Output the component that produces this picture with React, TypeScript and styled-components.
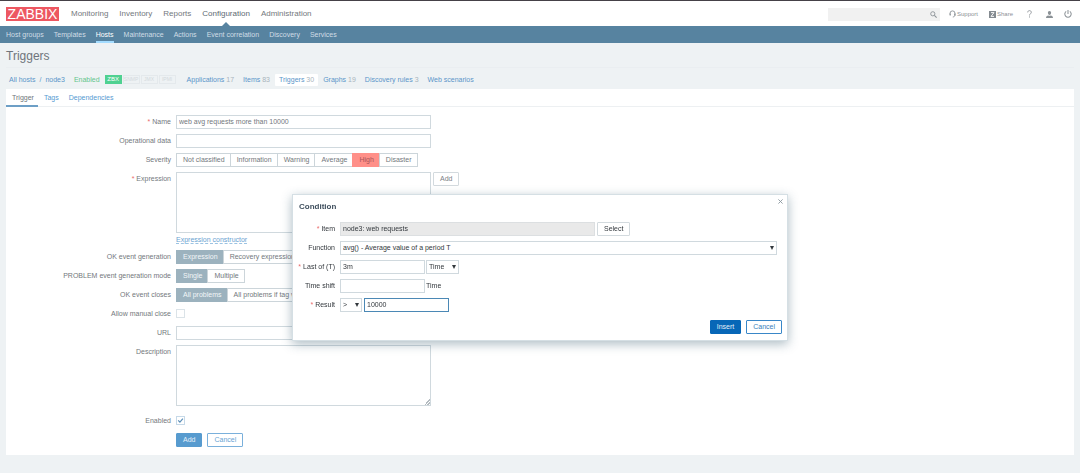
import React from "react";
import styled, { createGlobalStyle, css } from "styled-components";

const GlobalStyle = createGlobalStyle`
  *, *::before, *::after { box-sizing: border-box; }
  body {
    margin: 0;
    background: #eef2f4;
    color: #73787d;
    font-family: "Liberation Sans", Arial, sans-serif;
    font-size: 7px;
    line-height: 12px;
  }
  button, input, select, textarea { font: inherit; color: inherit; margin: 0; }
  a { text-decoration: none; color: inherit; }
  ul { list-style: none; margin: 0; padding: 0; }
`;

const Header = styled.header`
  display: flex;
  align-items: center;
  height: 26px;
  padding: 1px 5px 0 6px;
  background: #fff;
  border-top: 1px solid #454148;
`;

const Logo = styled.a`
  flex: none;
  width: 53px;
  height: 14px;
  margin-right: 12px;
  background: #ed5761;
  color: #fff;
  font-size: 14px;
  line-height: 14px;
  text-align: center;
`;

const MainMenu = styled.ul`
  display: flex;
  flex: 1;
  gap: 11px;
  font-size: 8px;
`;

const MainItem = styled.li<{ $active?: boolean }>`
  position: relative;
  line-height: 24px;
  ${(p) =>
    p.$active &&
    css`
      color: #5d6a74;
      &::after {
        content: "";
        position: absolute;
        left: 50%;
        bottom: 0;
        margin-left: -4px;
        border: 4px solid transparent;
        border-top: 0;
        border-bottom-color: #5783a0;
      }
    `}
`;

const HeaderTools = styled.div`
  display: flex;
  align-items: center;
  color: #8b9196;
  font-size: 6px;
`;

const SearchBox = styled.form`
  display: flex;
  align-items: center;
  width: 112px;
  height: 13px;
  margin-right: 9px;
  background: #f1f1f1;
`;

const SearchInput = styled.input`
  flex: 1;
  min-width: 0;
  border: 0;
  background: none;
  outline: 0;
`;

const PlainButton = styled.button`
  display: flex;
  padding: 0 3px 0 0;
  border: 0;
  background: none;
  color: #8b9196;
`;

const ToolLink = styled.a<{ $gap: number }>`
  display: flex;
  align-items: center;
  gap: 1px;
  margin-right: ${(p) => p.$gap}px;
`;

const SubMenu = styled.nav`
  height: 17px;
  padding: 0 6px;
  background: #5783a0;
  color: #d0dde6;
  ul { display: flex; gap: 10px; }
`;

const SubItem = styled.li<{ $active?: boolean }>`
  height: 17px;
  line-height: 17px;
  ${(p) =>
    p.$active &&
    css`
      color: #fff;
      border-bottom: 2px solid #a3dcff;
    `}
`;

const Main = styled.main`
  padding: 0 6px 18px;
`;

const Title = styled.h1`
  margin: 0;
  padding-top: 1px;
  height: 25px;
  font-size: 12px;
  line-height: 25px;
  font-weight: 400;
  color: #6f757b;
  border-bottom: 1px solid #eaeef1;
`;

const HostNav = styled.nav`
  display: flex;
  align-items: center;
  height: 21px;
  padding: 2px 3px 0;
  color: #5a95c9;
  white-space: nowrap;
`;

const Crumbs = styled.div`
  display: flex;
  gap: 4px;
  margin-right: 9px;
`;

const Status = styled.span`
  margin-right: 5px;
  color: #65c58c;
`;

const Badges = styled.div`
  display: flex;
  gap: 1px;
  margin-right: 7px;
`;

const Badge = styled.span<{ $on?: boolean }>`
  height: 9px;
  min-width: 17px;
  border: 1px solid ${(p) => (p.$on ? "#4fd191" : "#e4e9ec")};
  background: ${(p) => (p.$on ? "#4fd191" : "transparent")};
  color: ${(p) => (p.$on ? "#fff" : "#d3d9dd")};
  font-size: ${(p) => (p.$on ? 6 : 5)}px;
  line-height: 7px;
  text-align: center;
`;

const HostLink = styled.a<{ $active?: boolean }>`
  height: 12px;
  padding: 0 4px;
  margin-right: 1px;
  border-radius: 1px;
  background: ${(p) => (p.$active ? "#fff" : "transparent")};
`;

const Count = styled.span`
  color: #a9b4bc;
`;

const Panel = styled.section`
  background: #fff;
`;

const Tabs = styled.div`
  display: flex;
  height: 18px;
  border-bottom: 1px solid #edf0f2;
`;

const Tab = styled.button<{ $active?: boolean }>`
  height: 18px;
  padding: 2px 4px 0 6px;
  border: 0;
  border-bottom: 2px solid ${(p) => (p.$active ? "#6d9fc6" : "transparent")};
  background: none;
  color: ${(p) => (p.$active ? "#6f757b" : "#559ad2")};
`;

const Form = styled.form`
  padding: 8px 0;
`;

const Row = styled.div<{ $dialog?: boolean }>`
  display: grid;
  grid-template-columns: ${(p) => (p.$dialog ? "37px" : "165px")} minmax(0, 1fr);
  gap: 5px;
  margin-bottom: 5px;
`;

const LabelCell = styled.label`
  display: flex;
  justify-content: flex-end;
  gap: 2px;
  line-height: 14px;
  white-space: nowrap;
`;

const Star = styled.span`
  color: #ea6a6a;
`;

const Field = styled.div<{ $gap?: number }>`
  display: flex;
  align-items: flex-start;
  gap: ${(p) => p.$gap ?? 2}px;
  min-height: 14px;
  line-height: 14px;
`;

const Stack = styled.div`
  display: flex;
  flex-direction: column;
  align-items: flex-start;
  width: 255px;
`;

const TextInput = styled.input<{ $w: number; $focus?: boolean }>`
  width: ${(p) => p.$w}px;
  height: 14px;
  padding: 0 2px;
  border: 1px solid ${(p) => (p.$focus ? "#4b88b5" : "#d0d9de")};
  background: #fff;
  outline: 0;
  &[readonly] { background: #e9e9e9; border-color: #dcdfe1; }
`;

const TextArea = styled.textarea<{ $resize?: boolean }>`
  display: block;
  width: 255px;
  height: 61px;
  margin-bottom: ${(p) => (p.$resize ? 3 : 0)}px;
  padding: 2px;
  border: 1px solid #d0d9de;
  background: #fff;
  outline: 0;
  resize: ${(p) => (p.$resize ? "vertical" : "none")};
  &::-webkit-resizer {
    background: linear-gradient(135deg, transparent 80%, #b4bbc0 80%, #b4bbc0 84%, transparent 84%, transparent 90%, #b4bbc0 90%, #b4bbc0 94%, transparent 94%);
  }
`;

const DottedLink = styled.a`
  height: 11px;
  margin-bottom: 1px;
  color: #6aa3d1;
  border-bottom: 1px dashed #9cc3e2;
`;

const Segments = styled.div`
  display: flex;
`;

const Segment = styled.label<{ $on?: string }>`
  height: 14px;
  margin-left: -1px;
  padding: 0 5px 0 6px;
  border: 1px solid #ccd5da;
  line-height: 12px;
  white-space: nowrap;
  &:first-child { margin-left: 0; }
  input {
    position: absolute;
    opacity: 0;
    pointer-events: none;
  }
  &:has(input:checked) {
    background: ${(p) => p.$on ?? "#9cb2be"};
    border-color: ${(p) => p.$on ?? "#9cb2be"};
    color: ${(p) => (p.$on ? "#a8555a" : "#f2f6f8")};
  }
`;

const CheckBox = styled.input`
  appearance: none;
  width: 9px;
  height: 9px;
  margin-top: 2px;
  border: 1px solid #dbe3e8;
  background: #fff;
  &:checked {
    border-color: #c6d9e8;
    background: #fff
      url("data:image/svg+xml,%3Csvg xmlns='http://www.w3.org/2000/svg' viewBox='0 0 7 7'%3E%3Cpath d='M1.2 3.4l1.7 1.8 3-3.6' fill='none' stroke='%235c8fb8' stroke-width='1.2'/%3E%3C/svg%3E");
  }
`;

type Kind = "primary" | "outline" | "grey" | "darkGrey" | "blue" | "blueOutline";
const kinds: Record<Kind, [string, string, string]> = {
  primary: ["#579bcf", "#579bcf", "#e6f1fa"],
  outline: ["#fff", "#7ab0db", "#67a3d3"],
  grey: ["#fff", "#d3dade", "#7b8086"],
  darkGrey: ["#fff", "#d3dade", "#33383d"],
  blue: ["#0767b7", "#0767b7", "#e3eef8"],
  blueOutline: ["#fff", "#3987c8", "#3a80bb"],
};

const Button = styled.button<{ $kind: Kind }>`
  height: 14px;
  padding: 0 6px;
  border: 1px solid ${(p) => kinds[p.$kind][1]};
  border-radius: 1px;
  background: ${(p) => kinds[p.$kind][0]};
  color: ${(p) => kinds[p.$kind][2]};
  line-height: 12px;
`;

const Actions = styled.div<{ $dialog?: boolean }>`
  display: flex;
  gap: 5px;
  ${(p) => (p.$dialog ? "justify-content: flex-end; margin-top: 8px;" : "padding-left: 170px;")}
`;

const Overlay = styled.div`
  position: fixed;
  inset: 0;
  display: flex;
  justify-content: center;
  align-items: flex-start;
  padding-top: 194px;
`;

const Dialog = styled.section`
  position: relative;
  width: 496px;
  padding: 6px 5px;
  border: 1px solid #d5dfe4;
  background: #fff;
  color: #33383d;
  box-shadow: 0 3px 10px rgba(40, 80, 100, 0.38);
`;

const DialogTitle = styled.h2`
  margin: 0 0 9px 1px;
  font-size: 8px;
  line-height: 12px;
  font-weight: 700;
  color: #3f4f5e;
`;

const Close = styled.button`
  position: absolute;
  top: 2px;
  right: 2px;
  display: flex;
  padding: 2px;
  border: 0;
  background: none;
  color: #8a969e;
`;

const SelectWrap = styled.span<{ $w: number }>`
  position: relative;
  display: block;
  width: ${(p) => p.$w}px;
  select {
    appearance: none;
    display: block;
    width: 100%;
    height: 14px;
    padding: 0 2px;
    border: 1px solid #d0d9de;
    border-radius: 0;
    background: #fff;
    line-height: 12px;
  }
  svg {
    position: absolute;
    top: 5px;
    right: 3px;
    pointer-events: none;
  }
`;

const Select = ({ id, width, value, label }: { id: string; width: number; value: string; label?: string }) => (
  <SelectWrap $w={width}>
    <select id={id} aria-label={label} defaultValue={value}>
      <option>{value}</option>
    </select>
    <svg width="4" height="4" viewBox="0 0 4 4">
      <path d="M0 0h4L2 4z" fill="#33383d" />
    </svg>
  </SelectWrap>
);

const FormLabel = ({ text, id, required }: { text: string; id?: string; required?: boolean }) => (
  <LabelCell htmlFor={id}>
    {required && <Star>*</Star>}
    {text}
  </LabelCell>
);

const RadioGroup = ({ name, items, checked, color }: { name: string; items: string[]; checked: string; color?: string }) => (
  <Segments role="radiogroup" aria-label={name}>
    {items.map((item) => (
      <Segment key={item} $on={color}>
        <input type="radio" name={name} defaultChecked={item === checked} />
        {item}
      </Segment>
    ))}
  </Segments>
);

const mainMenu = ["Monitoring", "Inventory", "Reports", "Configuration", "Administration"];
const subMenu = ["Host groups", "Templates", "Hosts", "Maintenance", "Actions", "Event correlation", "Discovery", "Services"];
const hostLinks: [string, string][] = [
  ["Applications", "17"],
  ["Items", "83"],
  ["Triggers", "30"],
  ["Graphs", "19"],
  ["Discovery rules", "3"],
  ["Web scenarios", ""],
];

export default function App() {
  return (
    <>
      <GlobalStyle />
      <Header>
        <Logo href="#">ZABBIX</Logo>
        <MainMenu>
          {mainMenu.map((m) => (
            <MainItem key={m} $active={m === "Configuration"}>
              <a href="#">{m}</a>
            </MainItem>
          ))}
        </MainMenu>
        <HeaderTools>
          <SearchBox>
            <SearchInput aria-label="Search" />
            <PlainButton type="button" aria-label="Search">
              <svg width="7" height="7" viewBox="0 0 7 7" fill="none" stroke="currentColor">
                <circle cx="2.8" cy="2.8" r="2.1" strokeWidth="0.9" />
                <path d="M4.4 4.4l2.2 2.2" strokeWidth="1.1" />
              </svg>
            </PlainButton>
          </SearchBox>
          <ToolLink href="#" $gap={11}>
            <svg width="7" height="8" viewBox="0 0 7 8" fill="none" stroke="currentColor" strokeWidth="0.9">
              <path d="M1 4.6V3.4a2.5 2.5 0 0 1 5 0v1.4c0 1.2-.7 2-2.2 2.2" />
              <path d="M1.2 3.4v2M5.8 3.4v2" strokeWidth="1.2" />
            </svg>
            Support
          </ToolLink>
          <ToolLink href="#" $gap={14}>
            <svg width="7" height="7" viewBox="0 0 7 7">
              <path d="M0 0h7v7H0z" fill="#858b91" />
              <path d="M2 1.6h3L2 5.4h3" fill="none" stroke="#fff" strokeWidth="0.9" />
            </svg>
            Share
          </ToolLink>
          <ToolLink href="#" $gap={14} aria-label="Help">
            <svg width="5" height="8" viewBox="0 0 5 8" fill="none" stroke="currentColor" strokeWidth="0.9">
              <path d="M.7 2.4C.7 1.3 1.5.6 2.5.6s1.8.7 1.8 1.7c0 1.4-1.8 1.5-1.8 3.2M2.5 6.4v1.1" />
            </svg>
          </ToolLink>
          <ToolLink href="#" $gap={11} aria-label="User profile">
            <svg width="7" height="7" viewBox="0 0 7 7" fill="currentColor">
              <path d="M3.5 0C4.5 0 5.1.8 5.1 1.8S4.5 4 3.5 4 1.9 2.8 1.9 1.8 2.5 0 3.5 0zM0 7c0-1.8.8-2.2 2.4-2.6.7.4 1.5.4 2.2 0C6.2 4.8 7 5.2 7 7z" />
            </svg>
          </ToolLink>
          <ToolLink href="#" $gap={3} aria-label="Sign out">
            <svg width="8" height="8" viewBox="0 0 7 7" fill="none" stroke="currentColor" strokeWidth="0.9">
              <path d="M1.9 1.2a2.8 2.8 0 1 0 3.2 0M3.5 0v3.4" />
            </svg>
          </ToolLink>
        </HeaderTools>
      </Header>
      <SubMenu>
        <ul>
          {subMenu.map((m) => (
            <SubItem key={m} $active={m === "Hosts"}>
              <a href="#">{m}</a>
            </SubItem>
          ))}
        </ul>
      </SubMenu>

      <Main>
        <Title>Triggers</Title>
        <HostNav>
          <Crumbs>
            <a href="#">All hosts</a>
            <span>/</span>
            <a href="#">node3</a>
          </Crumbs>
          <Status>Enabled</Status>
          <Badges>
            <Badge $on>ZBX</Badge>
            <Badge>SNMP</Badge>
            <Badge>JMX</Badge>
            <Badge>IPMI</Badge>
          </Badges>
          {hostLinks.map(([name, count]) => (
            <HostLink key={name} href="#" $active={name === "Triggers"}>
              {name}
              {count && <> <Count>{count}</Count></>}
            </HostLink>
          ))}
        </HostNav>

        <Panel>
          <Tabs role="tablist">
            <Tab role="tab" aria-selected $active>Trigger</Tab>
            <Tab role="tab">Tags</Tab>
            <Tab role="tab">Dependencies</Tab>
          </Tabs>
          <Form>
            <Row>
              <FormLabel id="name" text="Name" required />
              <Field><TextInput id="name" $w={255} defaultValue="web avg requests more than 10000" /></Field>
            </Row>
            <Row>
              <FormLabel id="opdata" text="Operational data" />
              <Field><TextInput id="opdata" $w={255} /></Field>
            </Row>
            <Row>
              <FormLabel text="Severity" />
              <RadioGroup
                name="Severity"
                items={["Not classified", "Information", "Warning", "Average", "High", "Disaster"]}
                checked="High"
                color="#ff9089"
              />
            </Row>
            <Row>
              <FormLabel id="expression" text="Expression" required />
              <Field>
                <Stack>
                  <TextArea id="expression" />
                  <DottedLink href="#">Expression constructor</DottedLink>
                </Stack>
                <Button type="button" $kind="grey">Add</Button>
              </Field>
            </Row>
            <Row>
              <FormLabel text="OK event generation" />
              <RadioGroup name="OK event generation" items={["Expression", "Recovery expression", "None"]} checked="Expression" />
            </Row>
            <Row>
              <FormLabel text="PROBLEM event generation mode" />
              <RadioGroup name="PROBLEM event generation mode" items={["Single", "Multiple"]} checked="Single" />
            </Row>
            <Row>
              <FormLabel text="OK event closes" />
              <RadioGroup name="OK event closes" items={["All problems", "All problems if tag values match"]} checked="All problems" />
            </Row>
            <Row>
              <FormLabel id="manual" text="Allow manual close" />
              <Field><CheckBox id="manual" type="checkbox" /></Field>
            </Row>
            <Row>
              <FormLabel id="url" text="URL" />
              <Field><TextInput id="url" $w={255} /></Field>
            </Row>
            <Row>
              <FormLabel id="description" text="Description" />
              <Field><TextArea id="description" $resize /></Field>
            </Row>
            <Row>
              <FormLabel id="enabled" text="Enabled" />
              <Field><CheckBox id="enabled" type="checkbox" defaultChecked /></Field>
            </Row>
            <Actions>
              <Button type="button" $kind="primary">Add</Button>
              <Button type="button" $kind="outline">Cancel</Button>
            </Actions>
          </Form>
        </Panel>
      </Main>

      <Overlay>
        <Dialog role="dialog" aria-labelledby="condition-title">
          <Close type="button" aria-label="Close">
            <svg width="5" height="5" viewBox="0 0 5 5" fill="none" stroke="currentColor" strokeWidth="0.9">
              <path d="M.4.4l4.2 4.2M4.6.4L.4 4.6" />
            </svg>
          </Close>
          <DialogTitle id="condition-title">Condition</DialogTitle>
          <Row $dialog>
            <FormLabel id="item" text="Item" required />
            <Field>
              <TextInput id="item" $w={255} readOnly defaultValue="node3: web requests" />
              <Button type="button" $kind="darkGrey">Select</Button>
            </Field>
          </Row>
          <Row $dialog>
            <FormLabel id="function" text="Function" />
            <Select id="function" width={437} value="avg() - Average value of a period T" />
          </Row>
          <Row $dialog>
            <FormLabel id="last" text="Last of (T)" required />
            <Field $gap={1}>
              <TextInput id="last" $w={85} defaultValue="3m" />
              <Select id="unit" width={33} value="Time" label="Unit" />
            </Field>
          </Row>
          <Row $dialog>
            <FormLabel id="shift" text="Time shift" />
            <Field $gap={1}>
              <TextInput id="shift" $w={85} />
              Time
            </Field>
          </Row>
          <Row $dialog>
            <FormLabel id="result" text="Result" required />
            <Field>
              <Select id="operator" width={22} value="&gt;" label="Operator" />
              <TextInput id="result" $w={85} $focus defaultValue="10000" />
            </Field>
          </Row>
          <Actions $dialog>
            <Button type="button" $kind="blue">Insert</Button>
            <Button type="button" $kind="blueOutline">Cancel</Button>
          </Actions>
        </Dialog>
      </Overlay>
    </>
  );
}
